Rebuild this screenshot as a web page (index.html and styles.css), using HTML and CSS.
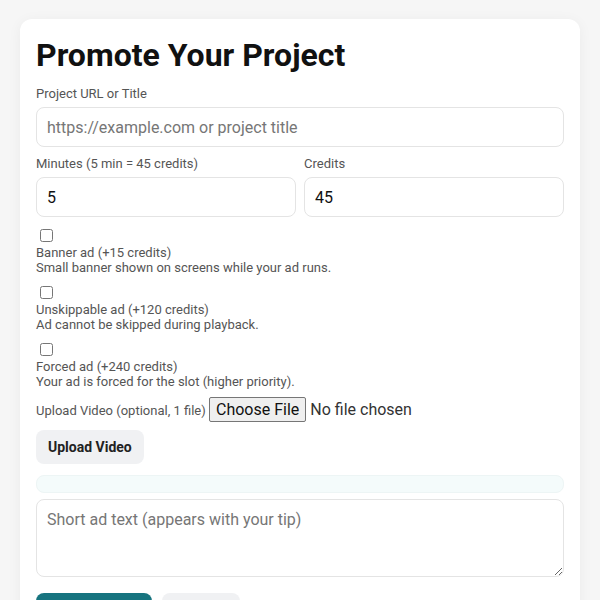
FILE: index.html
```html
<!DOCTYPE html>
<html lang="en">
<head>
<meta charset="utf-8">
<title>Promote Your Project</title>
<link rel="stylesheet" href="styles.css">
</head>
<body>
<div class="page">
  <main class="card">
    <h1 class="title">Promote Your Project</h1>
    <div class="field">
      <label class="label" for="proj">Project URL or Title</label>
      <input class="input" id="proj" type="text" placeholder="https://example.com or project title">
    </div>
    <div class="grid">
      <div class="field">
        <label class="label" for="mins">Minutes (5 min = 45 credits)</label>
        <input class="input" id="mins" type="text" value="5">
      </div>
      <div class="field">
        <label class="label" for="creds">Credits</label>
        <input class="input" id="creds" type="text" value="45">
      </div>
    </div>
    <div class="options">
      <label class="opt">
        <input class="check" type="checkbox">
        <span class="opt-title">Banner ad (+15 credits)</span>
        <span class="opt-desc">Small banner shown on screens while your ad runs.</span>
      </label>
      <label class="opt">
        <input class="check" type="checkbox">
        <span class="opt-title">Unskippable ad (+120 credits)</span>
        <span class="opt-desc">Ad cannot be skipped during playback.</span>
      </label>
      <label class="opt">
        <input class="check" type="checkbox">
        <span class="opt-title">Forced ad (+240 credits)</span>
        <span class="opt-desc">Your ad is forced for the slot (higher priority).</span>
      </label>
    </div>
    <div class="file-row">
      <label class="file-label" for="vid">Upload Video (optional, 1 file)</label>
      <input class="file" id="vid" type="file">
    </div>
    <button class="btn-soft" type="button">Upload Video</button>
    <div class="status"></div>
    <textarea class="textarea" placeholder="Short ad text (appears with your tip)"></textarea>
    <div class="actions">
      <button class="btn-primary" type="button">Promote Now</button>
      <button class="btn-ghost" type="button">Cancel</button>
    </div>
  </main>
</div>
</body>
</html>
```
FILE: styles.css
```css
html, body {
  margin: 0;
  padding: 0;
}
body {
  background: #f6f6f6;
  font-family: Roboto, "Liberation Sans", sans-serif;
  color: #111;
}
.page {
  padding: 19px 20px 40px;
}
.card {
  background: #fff;
  border-radius: 12px;
  padding: 17px 16px 20px;
  box-shadow: 0 2px 14px rgba(0, 0, 0, 0.05);
  display: flex;
  flex-direction: column;
}
.title {
  margin: 0 0 12px;
  font-size: 32px;
  font-weight: 700;
  line-height: normal;
  color: #111;
}
.field {
  display: flex;
  flex-direction: column;
}
.label {
  font-size: 13px;
  line-height: normal;
  color: #555;
  margin-bottom: 6px;
}
.input {
  box-sizing: border-box;
  width: 100%;
  height: 40px;
  border: 1px solid #e4e4e4;
  border-radius: 8px;
  padding: 0 10px;
  font-family: Roboto, "Liberation Sans", sans-serif;
  font-size: 16px;
  color: #111;
  background: #fff;
  outline: none;
}
.input::placeholder,
.textarea::placeholder {
  color: #767676;
}
.grid {
  margin-top: 9px;
  display: grid;
  grid-template-columns: 1fr 1fr;
  gap: 8px;
}
.options {
  margin-top: 9px;
  display: flex;
  flex-direction: column;
  gap: 8px;
}
.opt {
  display: flex;
  flex-direction: column;
  align-items: flex-start;
  font-size: 13px;
  line-height: normal;
  color: #555;
}
.check {
  display: block;
  margin: 3px 3px 3px 4px;
  width: 13px;
  height: 13px;
}
.opt-title,
.opt-desc {
  display: block;
}
.file-row {
  margin-top: 8px;
  font-size: 13px;
  color: #555;
}
.file {
  font-family: Roboto, "Liberation Sans", sans-serif;
  font-size: 16px;
  color: #333;
}
.file::file-selector-button {
  font-family: Roboto, "Liberation Sans", sans-serif;
  font-size: 16px;
  color: #111;
  padding: 2px 6px;
  margin-right: 4px;
  border: 1px solid #767676;
  border-radius: 2px;
  background: #efefef;
}
.btn-soft {
  align-self: flex-start;
  margin-top: 8px;
  height: 34px;
  padding: 0 12px;
  border: none;
  border-radius: 8px;
  background: #f0f1f3;
  font-family: Roboto, "Liberation Sans", sans-serif;
  font-size: 14px;
  font-weight: 700;
  color: #222;
}
.status {
  margin-top: 11px;
  height: 18px;
  box-sizing: border-box;
  border: 1px solid #edf5f5;
  border-radius: 8px;
  background: #f4fbfb;
}
.textarea {
  display: block;
  margin-top: 6px;
  box-sizing: border-box;
  width: 100%;
  height: 78px;
  border: 1px solid #e4e4e4;
  border-radius: 8px;
  padding: 10px;
  font-family: Roboto, "Liberation Sans", sans-serif;
  font-size: 16px;
  color: #111;
  resize: vertical;
  outline: none;
}
.actions {
  margin-top: 16px;
  display: flex;
  gap: 10px;
}
.btn-primary {
  width: 116px;
  height: 44px;
  border: none;
  border-radius: 8px;
  background: #17747f;
  color: #fff;
  font-family: Roboto, "Liberation Sans", sans-serif;
  font-size: 14px;
  font-weight: 700;
}
.btn-ghost {
  width: 78px;
  height: 44px;
  border: none;
  border-radius: 8px;
  background: #f0f1f3;
  color: #222;
  font-family: Roboto, "Liberation Sans", sans-serif;
  font-size: 14px;
  font-weight: 700;
}
```
